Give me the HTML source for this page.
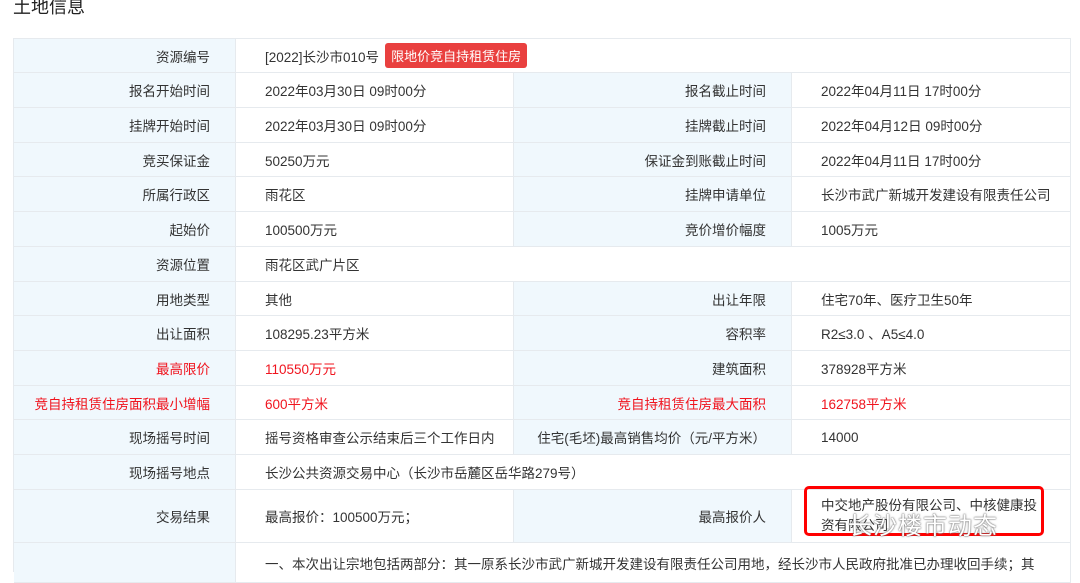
<!DOCTYPE html>
<html><head><meta charset="utf-8"><style>
body{margin:0;width:1080px;height:572px;overflow:hidden;background:#fff;font-family:"Liberation Sans","Noto Sans CJK SC",sans-serif;font-size:13.5px;color:#333;position:relative}
h1{position:absolute;left:13px;top:-7px;margin:0;font-size:18px;font-weight:normal;color:#222}
.c{position:absolute;box-sizing:border-box;border-right:1px solid #e6eaee;border-bottom:1px solid #e6eaee;display:flex;align-items:center;white-space:nowrap;overflow:hidden}
.l{background:#f0f8fd;justify-content:flex-end;padding-right:25px}
.v{background:#fff;padding-left:29px}
.r{color:#f0141e}
.tag{background:#e9403f;color:#fff;border-radius:3px;padding:3px 6px;margin-left:6px;font-size:13px}
</style></head><body>
<h1>土地信息</h1>
<div style="position:absolute;left:14px;top:38px;width:1057px;height:1px;background:#e6eaee"></div>
<div style="position:absolute;left:13px;top:38px;width:1px;height:534px;background:#e6eaee"></div>
<div id="t"></div>
<div style="position:absolute;left:804px;top:486px;width:240px;height:50px;border:3px solid #f00;border-radius:5px;box-sizing:border-box"></div>
<div style="position:absolute;left:848px;top:506px;font-size:24px;color:#fff;text-shadow:0 0 1px #555,0 0 2px #777;letter-spacing:1px">长沙楼市动态</div>
<script>
var rows=[
[39,34,["资源编号",'[2022]长沙市010号<span class="tag">限地价竞自持租赁住房</span>']],
[73,35,["报名开始时间","2022年03月30日 09时00分","报名截止时间","2022年04月11日 17时00分"]],
[108,35,["挂牌开始时间","2022年03月30日 09时00分","挂牌截止时间","2022年04月12日 09时00分"]],
[143,34,["竞买保证金","50250万元","保证金到账截止时间","2022年04月11日 17时00分"]],
[177,35,["所属行政区","雨花区","挂牌申请单位","长沙市武广新城开发建设有限责任公司"]],
[212,35,["起始价","100500万元","竞价增价幅度","1005万元"]],
[247,35,["资源位置","雨花区武广片区"]],
[282,34,["用地类型","其他","出让年限","住宅70年、医疗卫生50年"]],
[316,35,["出让面积","108295.23平方米","容积率","R2≤3.0 、A5≤4.0"]],
[351,35,['<span class="r">最高限价</span>','<span class="r">110550万元</span>',"建筑面积","378928平方米"]],
[386,34,['<span class="r">竞自持租赁住房面积最小增幅</span>','<span class="r">600平方米</span>','<span class="r">竞自持租赁住房最大面积</span>','<span class="r">162758平方米</span>']],
[420,35,["现场摇号时间","摇号资格审查公示结束后三个工作日内","住宅(毛坯)最高销售均价（元/平方米）","14000"]],
[455,35,["现场摇号地点","长沙公共资源交易中心（长沙市岳麓区岳华路279号）"]],
[490,53,["交易结果","最高报价：100500万元；","最高报价人",'<div style="line-height:20px;white-space:normal;width:225px">中交地产股份有限公司、中核健康投资有限公司</div>']],
[543,40,["",'<div>一、本次出让宗地包括两部分：其一原系长沙市武广新城开发建设有限责任公司用地，经长沙市人民政府批准已办理收回手续；其</div>']]
];
var xs=[14,236,514,792,1071],h="";
rows.forEach(function(r){var y=r[0],ht=r[1],c=r[2];
if(c.length==2){h+='<div class="c l" style="left:14px;top:'+y+'px;width:222px;height:'+ht+'px">'+c[0]+'</div>';
h+='<div class="c v" style="left:236px;top:'+y+'px;width:835px;height:'+ht+'px">'+c[1]+'</div>';}
else for(var i=0;i<4;i++){h+='<div class="c '+(i%2?'v':'l')+'" style="left:'+xs[i]+'px;top:'+y+'px;width:'+(xs[i+1]-xs[i])+'px;height:'+ht+'px">'+c[i]+'</div>';}
});
document.getElementById('t').innerHTML=h;
</script>
</body></html>
